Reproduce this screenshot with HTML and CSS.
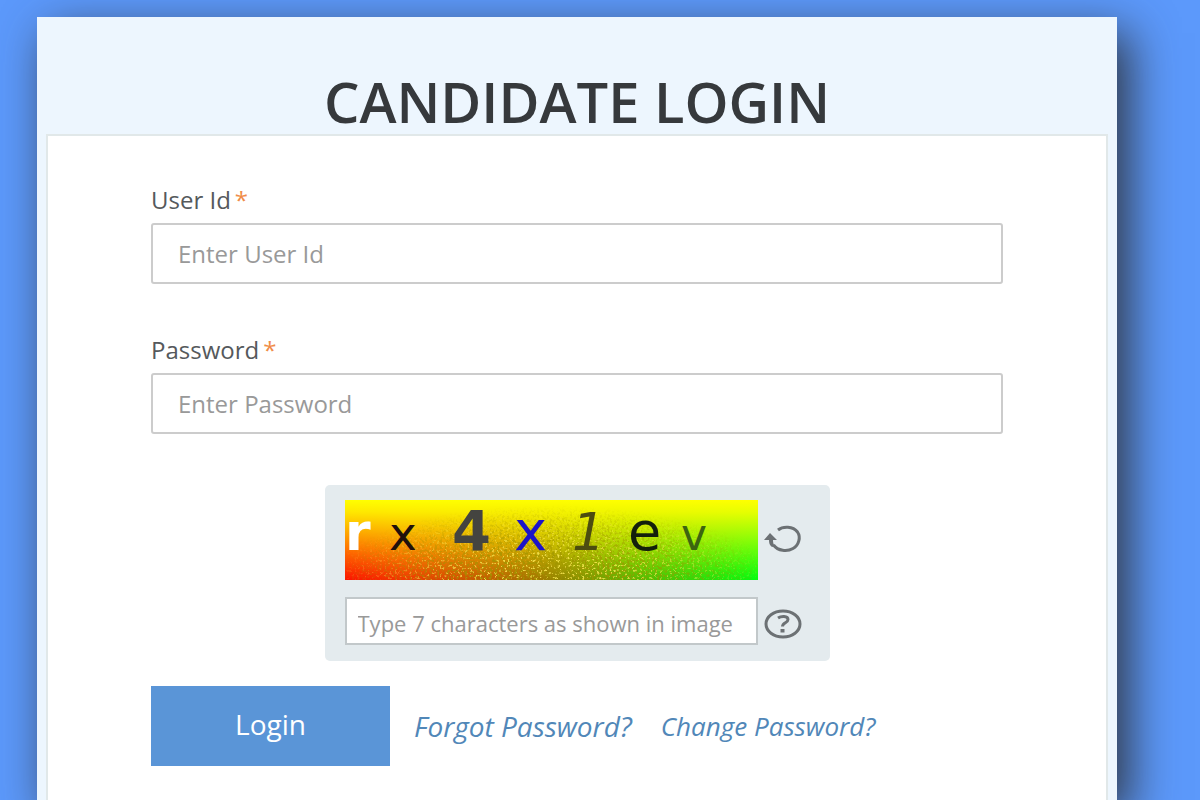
FILE: index.html
```html
<!DOCTYPE html>
<html lang="en">
<head>
    <meta charset="UTF-8">
    <meta name="viewport" content="width=device-width, initial-scale=1.0">
    <title>Candidate Login</title>
    <link rel="stylesheet" href="styles.css">
</head>
<body>
    <main class="card">
        <h1>CANDIDATE LOGIN</h1>
        <form class="panel">
            <div class="field">
                <label for="userId">User Id<span class="required">*</span></label>
                <input type="text" id="userId" placeholder="Enter User Id" required>
            </div>
            <div class="field">
                <label for="password">Password<span class="required">*</span></label>
                <input type="password" id="password" placeholder="Enter Password" required>
            </div>

            <div class="captcha">
                <svg class="captcha-image" viewBox="0 0 413 80" role="img" aria-label="Captcha">
                    <defs>
                        <linearGradient id="hue" x1="0" x2="1" y1="0" y2="0">
                            <stop offset="0" stop-color="#ff1000"/>
                            <stop offset="0.15" stop-color="#f03800"/>
                            <stop offset="0.45" stop-color="#a87000"/>
                            <stop offset="0.7" stop-color="#58b800"/>
                            <stop offset="1" stop-color="#00ff10"/>
                        </linearGradient>
                        <linearGradient id="fade" x1="0" x2="0" y1="0" y2="1">
                            <stop offset="0" stop-color="#ffff00"/>
                            <stop offset="0.15" stop-color="#ffff00" stop-opacity="0.9"/>
                            <stop offset="1" stop-color="#ffff00" stop-opacity="0"/>
                        </linearGradient>
                        <radialGradient id="grainFade" cx="0.5" cy="1" r="0.55" gradientTransform="translate(0 -0.7) scale(1 1.7)">
                            <stop offset="0.3" stop-color="#fff"/>
                            <stop offset="1" stop-color="#000"/>
                        </radialGradient>
                        <mask id="grainMask">
                            <rect width="413" height="80" fill="url(#grainFade)"/>
                        </mask>
                        <filter id="darkGrain" x="0" y="0" width="1" height="1">
                            <feTurbulence type="fractalNoise" baseFrequency="0.4" numOctaves="3" seed="3"/>
                            <feColorMatrix values="0 0 0 0 0.35  0 0 0 0 0.3  0 0 0 0 0  6 0 0 0 -2.9"/>
                        </filter>
                        <filter id="lightGrain" x="0" y="0" width="1" height="1">
                            <feTurbulence type="fractalNoise" baseFrequency="0.4" numOctaves="3" seed="8"/>
                            <feColorMatrix values="0 0 0 0 1  0 0 0 0 0.85  0 0 0 0 0.1  7 0 0 0 -4.1"/>
                        </filter>
                    </defs>
                    <rect width="413" height="80" fill="url(#hue)"/>
                    <rect width="413" height="80" fill="url(#fade)"/>
                    <g mask="url(#grainMask)">
                        <rect width="413" height="80" filter="url(#darkGrain)" opacity="0.8"/>
                        <rect width="413" height="80" filter="url(#lightGrain)" opacity="0.8"/>
                    </g>
                    <text x="0" y="50" font-size="52" font-weight="bold" fill="#fff">r</text>
                    <text x="44" y="50" font-size="47" fill="#20100c">x</text>
                    <text x="107" y="50" font-size="56" font-weight="bold" fill="#444440">4</text>
                    <text x="169" y="50" font-size="56" fill="#1c14c8">x</text>
                    <text x="227" y="50" font-size="52" font-style="italic" fill="#4c4c10">1</text>
                    <text x="283" y="50" font-size="54" fill="#14200c">e</text>
                    <text x="336" y="50" font-size="44" fill="#3c6410">v</text>
                </svg>
                <button type="button" class="icon-button" aria-label="Refresh captcha">
                    <svg width="38" height="30" viewBox="0 0 38 30" fill="none">
                        <path d="M14 5C19 1 29 1 33.500 7C37 12 35 20 29 23.500C23 27 14 26 9.500 20" stroke="#6c7174" stroke-width="3"/>
                        <path d="M0 15L6 8L13 15H9C9 18 9.500 19 11 21L8 22C5.500 20 5 18 5 15Z" fill="#6c7174"/>
                    </svg>
                </button>
                <input type="text" class="captcha-input" aria-label="Captcha characters" placeholder="Type 7 characters as shown in image">
                <button type="button" class="icon-button help" aria-label="Help">
                    <svg width="38" height="30" viewBox="0 0 38 30" fill="none" stroke="#6c7174">
                        <ellipse cx="19" cy="15" rx="17" ry="13" stroke-width="3"/>
                        <path d="M14 9C17 7 24 6.500 24 10.500C24 14 18.500 13.500 18.500 17.500" stroke-width="3"/>
                        <path d="M18.500 20V23.500" stroke-width="4"/>
                    </svg>
                </button>
            </div>

            <div class="actions">
                <button type="submit" class="login">Login</button>
                <a href="#" class="forgot">Forgot Password?</a>
                <a href="#">Change Password?</a>
            </div>
        </form>
    </main>
</body>
</html>
```
FILE: styles.css
```css
* { box-sizing: border-box; }
body { margin: 0; min-height: 100vh; display: flex; padding: 17px 83px 0 37px; background: #5c99fb; font-family: "Open Sans", sans-serif; color: #55595c; }
.card { flex: 1; display: flex; flex-direction: column; padding: 56px 9px 0; background: #edf6fe; box-shadow: 12px 16px 44px rgba(45, 48, 55, 0.95); }
h1 { margin: 0; height: 61px; line-height: 56px; text-align: center; font-size: 56px; font-weight: 600; color: #36393c; }
.panel { flex: 1; padding: 49px 103px 32px; background: #fff; border: 2px solid #e1e8e9; border-width: 2px 2px 0; }
.field { margin-bottom: 51px; }
.field label { display: block; height: 38px; line-height: 30px; font-size: 24px; }
.required { margin-left: 4px; color: #f08c48; }
input { font-family: inherit; color: #55595c; background: #fff; border: 2px solid #ccc; }
input::placeholder { color: #999; opacity: 1; }
.field input { display: block; width: 100%; height: 61px; padding: 0 25px; font-size: 24px; border-radius: 3px; }
.captcha { display: grid; grid-template-columns: 1fr 38px; gap: 17px 6px; align-items: center; width: 505px; max-width: 100%; margin: 0 auto 25px; padding: 15px 28px 16px 20px; background: #e4ebee; border-radius: 5px; }
.captcha-image { display: block; width: 100%; font-family: "DejaVu Sans", sans-serif; }
.captcha-input { width: 100%; height: 48px; padding: 4px 11px 0; font-size: 22px; border-color: #c2c8ca; }
.icon-button { display: flex; padding: 0; background: none; border: none; cursor: pointer; }
.help { padding-top: 6px; }
.actions { display: flex; align-items: center; }
.login { width: 239px; height: 80px; margin-right: 24px; padding: 0 0 4px; font-family: inherit; font-size: 28px; color: #fff; background: #5a95d7; border: none; cursor: pointer; }
.actions a { font-size: 26px; font-style: italic; color: #5187b8; text-decoration: none; }
.actions .forgot { margin-right: 29px; font-size: 28px; }
```
